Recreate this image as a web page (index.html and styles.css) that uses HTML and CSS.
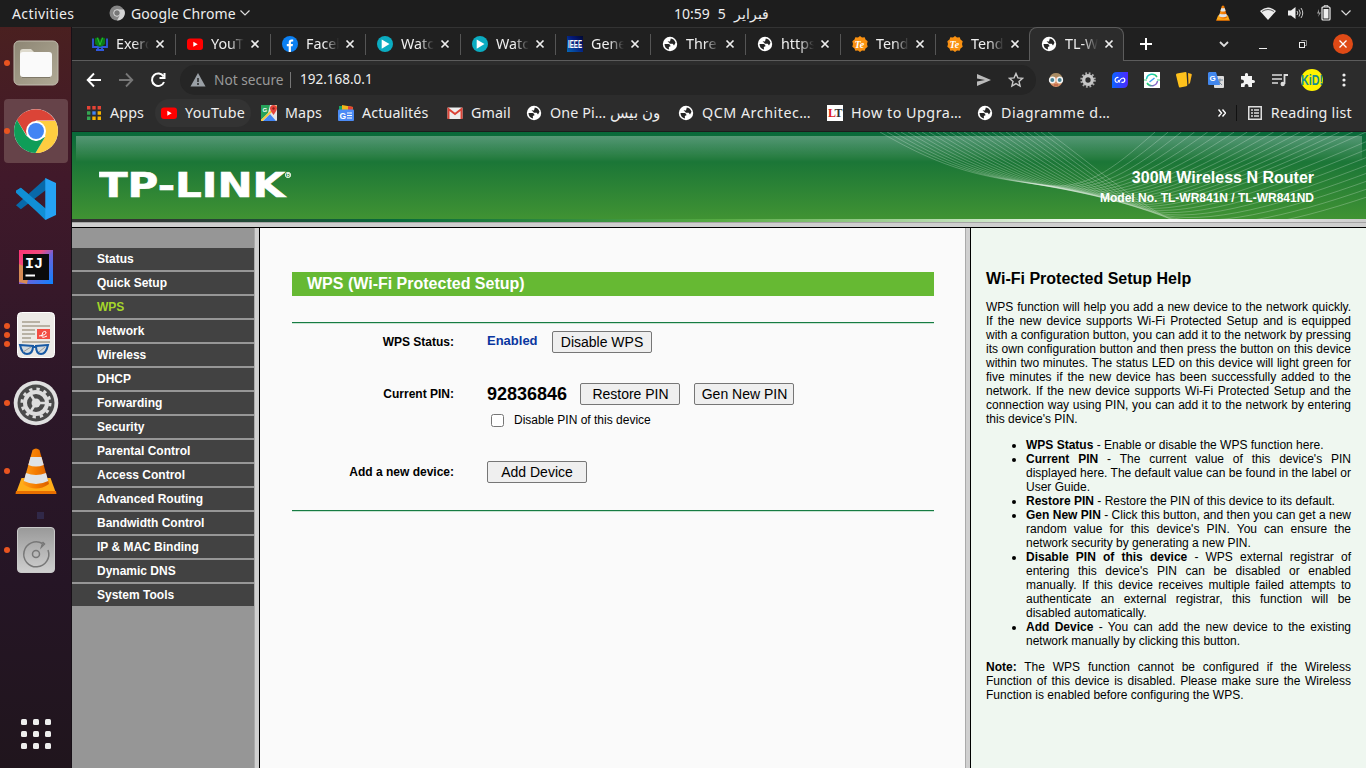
FILE: index.html
```html
<!DOCTYPE html>
<html lang="en">
<head>
<meta charset="utf-8">
<title>TL-WR841N</title>
<link rel="stylesheet" href="styles.css">
</head>
<body>
<svg class="defs" width="0" height="0">
  <defs>
    <linearGradient id="gBlue" x1="0" y1="0" x2="1" y2="0"><stop offset="0" stop-color="#0c64ff"/><stop offset="1" stop-color="#4c28ff"/></linearGradient>
    <linearGradient id="gRing" x1="0" y1="0" x2="1" y2="1"><stop offset="0" stop-color="#18c8e8"/><stop offset=".5" stop-color="#20d070"/><stop offset="1" stop-color="#b030f0"/></linearGradient>
    <linearGradient id="gIeee" x1="0" y1="1" x2="1" y2="0"><stop offset="0" stop-color="#0668b8"/><stop offset=".6" stop-color="#04197a"/><stop offset="1" stop-color="#010830"/></linearGradient>
    <linearGradient id="gFile" x1="0" y1="0" x2="1" y2="1"><stop offset="0" stop-color="#8d8674"/><stop offset="1" stop-color="#b0a995"/></linearGradient>
    <linearGradient id="gDisk" x1="0" y1="0" x2="0" y2="1"><stop offset="0" stop-color="#999"/><stop offset="1" stop-color="#cfcfcf"/></linearGradient>
    <linearGradient id="gCone" x1="0" y1="0" x2="1" y2="0"><stop offset="0" stop-color="#ff9e1b"/><stop offset=".5" stop-color="#f57c00"/><stop offset="1" stop-color="#d95f00"/></linearGradient>
    <linearGradient id="gIj" x1="0" y1="0" x2="1" y2="1"><stop offset="0" stop-color="#ff3274"/><stop offset=".35" stop-color="#ef4b7d"/><stop offset=".55" stop-color="#6c62dc"/><stop offset="1" stop-color="#0a84ff"/></linearGradient>
    <symbol id="globe" viewBox="0 0 16 16"><circle cx="8" cy="8" r="7.200" fill="#fff"/><path d="M2.500 8H7q1.500.8 1.500 2.200L6.800 11l.2 2.500Q2.700 12.500 2.500 8ZM5.500 5.200 8 5.500l.8-3q3.700.6 4.700 4.300L12 9.500l-1.300-1.700H8L6.800 6.600Z" fill="#252525"/></symbol>
    <symbol id="close" viewBox="0 0 10 10"><path d="M1.500 1.500l7 7M8.500 1.500l-7 7" stroke="#eee" stroke-width="1.700"/></symbol>
    <symbol id="yt" viewBox="0 0 16 16"><rect y="2.500" width="16" height="11.500" rx="3" fill="#f00"/><path d="M6.300 5.700v5l4.400-2.500Z" fill="#fff"/></symbol>
    <symbol id="fb" viewBox="0 0 16 16"><circle cx="8" cy="8" r="8" fill="#0c80f2"/><path d="M6.700 16v-5.700H4.800V8h1.900V6.300Q6.800 3.500 9.500 3.500h1.700v2H10q-1.100 0-1.100 1.100V8H11l-.4 2.300H8.900V16Z" fill="#fff"/></symbol>
    <symbol id="play" viewBox="0 0 16 16"><circle cx="8" cy="8" r="8" fill="#0bacc1"/><path d="M4.700 3.400v9.400L12.500 8Z" fill="#fff"/></symbol>
    <symbol id="ieee" viewBox="0 0 16 16"><rect width="16" height="16" fill="url(#gIeee)"/><text x="1" y="11.700" font-size="10.500" textLength="14" lengthAdjust="spacingAndGlyphs" class="bold" fill="#fff">IEEE</text></symbol>
    <symbol id="tenda" viewBox="0 0 16 16"><path d="m8 0 2 1.500 2.700-.3.8 2.400 2.200 1.700L15 8l.7 2.700-2.200 1.700-.8 2.400-2.700-.3L8 16l-2-1.500-2.700.3-.8-2.400L.3 10.700 1 8l-.7-2.700 2.200-1.700.8-2.400 2.700.3Z" fill="#fa9111"/><text x="2.500" y="11.500" font-size="10" class="script" fill="#fff">Te</text></symbol>
    <symbol id="exer" viewBox="0 0 16 16"><path d="M1 2.500V11h14V2.500M6 11v3M10 11v3M4 14h8" fill="none" stroke="#3058dc" stroke-width="1.800"/><path d="M3 2q1.500 1 2-1 2 0 3 4 1-4 3-4 .5 2 2 1v6q-3 3-5 3T3 8Z" fill="#0b7b16"/><path d="M5.500 2 8 9l2.500-7" fill="none" stroke="#29bf30"/></symbol>
    <symbol id="cone" viewBox="0 0 42 46"><path d="M6.500 30h29L41 45H1Z" fill="#ffad19"/><path d="M1 43h40l.5 3H.5Z" fill="#e87000"/><path d="M17.500 2q3.500-3 7 0L34 36q-13 9-26 0Z" fill="url(#gCone)"/><path d="m15.500 9 11 0 2.200 8q-7.700 3-15.400 0ZM11 25q10 4 20 0l2.200 8q-12.200 6-24.400 0Z" fill="#dfe3e6"/></symbol>
    <symbol id="chrome" viewBox="0 0 44 44"><circle cx="22" cy="22" r="22" fill="#fff"/><path d="M2.900 11A22 22 0 0 1 41 11.500H22L13 27Z" fill="#db4437"/><path d="M22 12h19.500A22 22 0 0 1 21.500 44L31.500 27Z" fill="#ffcd40"/><path d="M3 11A22 22 0 0 0 21.500 44L31 28 22 32 12.500 27Z" fill="#0f9d58"/><circle cx="22" cy="22" r="10" fill="#fff"/><circle cx="22" cy="22" r="8" fill="#4285f4"/></symbol>
  </defs>
</svg>

<div class="topbar">
  <span class="activities">Activities</span>
  <svg class="tb-chrome" viewBox="0 0 16 16"><circle cx="8" cy="8" r="7.500" fill="#858585"/><path d="M8 4.500h7A7.500 7.500 0 0 1 8 15.500L11 10Z" fill="#d4d4d4"/><circle cx="8" cy="8" r="3.300" fill="#777" stroke="#ddd"/></svg>
  <span class="appname">Google Chrome</span>
  <svg class="tb-chev" viewBox="0 0 12 8"><path d="M1.500 1.500 6 6l4.500-4.500" fill="none" stroke="#ddd" stroke-width="1.200"/></svg>
  <span class="clock" dir="ltr"><b>10:59</b><b>5</b><b class="month">فبراير</b></span>
  <span class="tray">
    <svg width="14" height="16"><use href="#cone"/></svg>
    <svg class="wifi" viewBox="0 0 16 13"><path d="M0 4q8-7 16 0L8 13Z" fill="#eee"/><path d="M2 4.500Q8 .500 14 4.500" fill="none" stroke="#1d1d1d" stroke-width=".7"/></svg>
    <svg class="vol" viewBox="0 0 16 14"><path d="M0 4.500h3L7.500 1v12L3 9.500H0Z" fill="#eee"/><path d="M9 5q1.700 2 0 4M11 3.500q2.500 3.500 0 7M13 2q3.500 5 0 10" fill="none" stroke="#ccc"/></svg>
    <svg class="bat" viewBox="0 0 15 16"><path d="M3 4 1 8.500h2L2 12l3-4.500H3Z" fill="#999"/><path d="M8 2V.8h4V2" fill="none" stroke="#eee"/><rect x="6" y="2" width="8" height="13" rx="1" fill="none" stroke="#eee" stroke-width="1.200"/><rect x="7.500" y="4" width="5" height="9.500" fill="#eee"/></svg>
    <svg class="tb-chev" viewBox="0 0 12 8"><path d="M1.500 1.500 6 6l4.500-4.500" fill="none" stroke="#ddd" stroke-width="1.200"/></svg>
  </span>
</div>

<div class="desktop">
  <nav class="dock">
    <div class="dk one"><svg width="46" height="46" viewBox="0 0 46 46"><rect x="1" y="1" width="44" height="44" rx="5" fill="url(#gFile)" stroke="#c1bcae"/><path d="M7 12q0-3 3-3h8l4 4v12H7Z" fill="#dedacd"/><rect x="7" y="12" width="32" height="25" rx="3" fill="#fafafa"/><path d="M9 37.500h28" stroke="#7e7868"/></svg></div>
    <div class="dk one active"><svg width="44" height="44"><use href="#chrome"/></svg></div>
    <div class="dk"><svg width="42" height="42" viewBox="0 0 43 43"><path d="m1 13 5-3 26 22-1 11Z" fill="#0786d0"/><path d="m1 28 5 4L32 12V0Z" fill="#0869aa"/><path d="m6 10 26 22v11L1 15v-2Z" fill="#118fd5"/><path d="m31 0 11 5v33l-11 5Z" fill="#25a2f4"/></svg></div>
    <div class="dk"><svg width="34" height="34" viewBox="0 0 34 34"><rect width="34" height="34" fill="url(#gIj)"/><path d="M0 14v18l8 2 3-15Z" fill="#d78b55"/><rect x="4" y="4" width="26" height="26" fill="#0b0b0b"/><text x="6" y="18" font-size="15" class="mono" fill="#fff">IJ</text><path d="M6.500 25.500h9.500" stroke="#fff" stroke-width="2"/></svg></div>
    <div class="dk three"><svg width="38" height="46" viewBox="0 0 38 46"><rect x=".5" y=".5" width="37" height="45" rx="4" fill="#eceae6" stroke="#fff"/><path d="M5 10h18M5 14h28M5 18h13M5 22h13M5 26h9M5 30h28" stroke="#b8b2a4" stroke-width="1.800"/><rect x="20" y="17" width="13" height="10" fill="#f34d43"/><path d="M22 24q8-1 7-4-3-2-4 3-1 4 5 1" fill="none" stroke="#fff"/><g fill="#d4dadd" stroke="#185aa4" stroke-width="2"><path d="m3 33 13 1q0 8-6 8-5 0-7-9ZM31 33l-12 1q0 8 5 8 5 0 7-9Z"/><path d="M16 35h3"/></g><path d="m6 40 8-5M22 40l6-5" stroke="#999"/></svg></div>
    <div class="dk one"><svg width="46" height="46" viewBox="0 0 46 46"><circle cx="23" cy="23" r="22.300" fill="#e0e0e0"/><circle cx="23" cy="23" r="18.500" fill="#4a4a4a"/><circle cx="23" cy="23" r="14" fill="none" stroke="#ddd" stroke-width="3" stroke-dasharray="3.300 4.030"/><circle cx="23" cy="23" r="11" fill="#4a4a4a" stroke="#ddd" stroke-width="4"/><path d="m23 23 9 0M23 23l-5-8M23 23l-5 8" stroke="#ddd" stroke-width="2.500"/><circle cx="23" cy="23" r="4.500" fill="#ddd"/></svg></div>
    <div class="dk one"><svg width="42" height="46"><use href="#cone"/></svg></div>
    <i class="dock-square"></i>
    <div class="dk one"><svg width="38" height="46" viewBox="0 0 38 46"><rect x=".5" y=".5" width="37" height="45" rx="3.500" fill="url(#gDisk)" stroke="#c9c9c9"/><path d="M25.500 16.500A12.500 12.500 0 1 0 31 23M25.500 16.500l-1 3.500 3-3-2-2" fill="none" stroke="#777" stroke-width="1.500"/><circle cx="19" cy="27" r="3.500" fill="none" stroke="#777" stroke-width="1.500"/></svg></div>
    <div class="apps-grid"><i></i><i></i><i></i><i></i><i></i><i></i><i></i><i></i><i></i></div>
  </nav>

  <div class="window">
    <div class="tabs">
      <div class="tab"><svg><use href="#exer"/></svg><span>Exerc</span><svg class="x"><use href="#close"/></svg></div>
      <div class="tab"><svg><use href="#yt"/></svg><span>YouTu</span><svg class="x"><use href="#close"/></svg></div>
      <div class="tab"><svg><use href="#fb"/></svg><span>Faceb</span><svg class="x"><use href="#close"/></svg></div>
      <div class="tab"><svg><use href="#play"/></svg><span>Watch</span><svg class="x"><use href="#close"/></svg></div>
      <div class="tab"><svg><use href="#play"/></svg><span>Watch</span><svg class="x"><use href="#close"/></svg></div>
      <div class="tab"><svg><use href="#ieee"/></svg><span>Gene</span><svg class="x"><use href="#close"/></svg></div>
      <div class="tab"><svg><use href="#globe"/></svg><span>Thre</span><svg class="x"><use href="#close"/></svg></div>
      <div class="tab"><svg><use href="#globe"/></svg><span>https</span><svg class="x"><use href="#close"/></svg></div>
      <div class="tab"><svg><use href="#tenda"/></svg><span>Tend</span><svg class="x"><use href="#close"/></svg></div>
      <div class="tab last"><svg><use href="#tenda"/></svg><span>Tend</span><svg class="x"><use href="#close"/></svg></div>
      <div class="tab current"><svg><use href="#globe"/></svg><span>TL-W</span><svg class="x"><use href="#close"/></svg></div>
      <div class="tab-tools">
        <svg width="12" height="12" viewBox="0 0 12 12"><path d="M0 6h12M6 0v12" stroke="#fff" stroke-width="2"/></svg>
        <svg class="caret" width="10" height="7" viewBox="0 0 10 7"><path d="m1 1 4 4 4-4" fill="none" stroke="#ddd" stroke-width="1.800"/></svg>
        <svg class="min" width="8" height="6"><path d="M0 5.500h8" stroke="#eee"/></svg>
        <svg class="max" width="8" height="8"><path d="M2.500 0v.5h5v5H6" fill="none" stroke="#888"/><rect x=".5" y="2.500" width="5" height="5" fill="none" stroke="#eee"/></svg>
        <span class="quit"><svg width="8" height="8"><path d="m.500.500 7 7M7.500.500l-7 7" stroke="#fff" stroke-width="1.300"/></svg></span>
      </div>
    </div>

    <div class="toolbar">
      <svg viewBox="0 0 16 16"><path d="M15 8H2M8 1.500 1.700 8 8 14.500" fill="none" stroke="#fff" stroke-width="1.900"/></svg>
      <svg viewBox="0 0 16 16"><path d="M1 8h13M8 1.500 14.300 8 8 14.500" fill="none" stroke="#777" stroke-width="1.800"/></svg>
      <svg viewBox="0 0 16 16"><path d="M13.500 4.500A6.200 6.200 0 1 0 14 10M14.500 1v5h-5" fill="none" stroke="#fff" stroke-width="2"/></svg>
      <div class="omnibox">
        <svg width="16" height="14" viewBox="0 0 16 14"><path d="M8 0l7.500 13.500H.5Z" fill="#9aa0a6"/><path d="M8 5v4M8 10v2" stroke="#252525" stroke-width="1.500"/></svg>
        <span class="insecure">Not secure</span><i></i><span class="url">192.168.0.1</span>
        <svg class="send" width="14" height="12"><path d="m0 0 14 6-14 6V7.500L8 6 0 4.500Z" fill="#bbb"/></svg>
        <svg class="star" width="16" height="16" viewBox="0 0 16 16"><path d="m8 1.500 1.900 4.400 4.700.4-3.600 3.100 1.100 4.600L8 11.600 3.900 14 5 9.400 1.400 6.300l4.700-.4Z" fill="none" stroke="#c8c8c8" stroke-width="1.400"/></svg>
      </div>
      <div class="ext">
        <svg viewBox="0 0 16 16"><circle cx="8" cy="8.500" r="6.500" fill="#d89267"/><path d="M1.500 6Q3 1 8 1t6.500 5q-6-2-13 0Z" fill="#a98c64"/><circle cx="4.300" cy="8" r="2.700" fill="#4b8494" stroke="#f4f4f4" stroke-width="1.500"/><circle cx="11.700" cy="8" r="2.700" fill="#4b8494" stroke="#f4f4f4" stroke-width="1.500"/><path d="M6 13h4" stroke="#b54a3a"/></svg>
        <svg viewBox="0 0 16 16"><circle cx="8" cy="8" r="6.500" fill="none" stroke="#aaa" stroke-width="2.500" stroke-dasharray="1.700 1.700"/><circle cx="8" cy="8" r="4.300" fill="none" stroke="#c6c6c6" stroke-width="3.300"/></svg>
        <svg viewBox="0 0 16 16"><path d="M5 0h11v11q0 5-5 5H0V5q0-5 5-5Z" fill="url(#gBlue)"/><path d="M6.500 5.500Q3.500 5 3 8q.5 3 3 2 1.500-1 2.500-2.500T11.500 6q2 1 1 3.500-1.500 1.500-3 .5M6 8l2 2.500" fill="none" stroke="#fff" stroke-width="1.200"/></svg>
        <svg viewBox="0 0 16 16"><rect width="16" height="16" fill="#fff"/><path d="M2.500 7a5.700 5.700 0 0 1 10.500-2M13.500 9a5.700 5.700 0 0 1-10.500 2" fill="none" stroke="url(#gRing)" stroke-width="1.500"/><path d="m5.500 10 5-4" stroke="#40a0f0" stroke-width="1.500"/><path d="M0 8h3M13 8h3" stroke="#41d07f"/></svg>
        <svg viewBox="0 0 16 16"><path d="M1 1.500 9.500 0q1 0 1 1l.8 12q0 1-1 1.300L4 15.600q-1 .1-1.200-1L0 3q0-1.300 1-1.500Z" fill="#ffc21c"/><path d="m12 1 3 .8q1 .3.8 1L14 11l-1.500 1.500Z" fill="#ffb81c"/></svg>
        <svg viewBox="0 0 16 16"><rect x="6" y="4" width="10" height="12" rx="1" fill="#ddd"/><path d="M9 8h6M12 6.500V8q0 4-2 5M10 9l4 4" stroke="#789" fill="none"/><path d="M1 0h7l4 13H1q-1 0-1-1V1Z" fill="#4287ed"/><text x="1.500" y="9" font-size="8" class="bold" fill="#fff">G</text></svg>
        <svg viewBox="0 0 16 16"><path d="M1 4h4Q4.500 1 6.500 1T8 4h4v4q3-.5 3 1.500T12 11v4H8.500q0-3-2-3t-2 3H1v-3.500q3 .2 3-2T1 7.500Z" fill="#f4f4f4"/></svg>
        <svg viewBox="0 0 16 16"><path d="M0 3h10M0 7h10M0 11h6" stroke="#ddd" stroke-width="1.600"/><path d="M12.500 12V3H16" fill="none" stroke="#ddd" stroke-width="1.800"/><circle cx="10.700" cy="12" r="2.200" fill="#ddd"/></svg>
        <svg class="avatar" viewBox="0 0 22 22"><circle cx="11" cy="11" r="11" fill="#fff200"/><text x="0" y="15.500" font-size="14" textLength="22" class="bold" lengthAdjust="spacingAndGlyphs" fill="#158d91">KiD!</text></svg>
        <svg viewBox="0 0 16 16"><g fill="#eee"><circle cx="8" cy="3" r="1.600"/><circle cx="8" cy="8" r="1.600"/><circle cx="8" cy="13" r="1.600"/></g></svg>
      </div>
    </div>

    <div class="bookmarks">
      <div class="bm w75"><svg viewBox="0 0 16 16"><path d="M1 1h3.400v3.400H1ZM6.300 1h3.400v3.400H6.300ZM11.600 1H15v3.400h-3.400Z" fill="#e54335"/><path d="M1 6.300h3.400v3.400H1ZM1 11.600h3.400V15H1Z" fill="#34a853"/><path d="M6.300 6.300h3.400v3.400H6.300Z" fill="#4285f4"/><path d="M11.600 6.300H15v3.400h-3.400ZM6.300 11.600h3.400V15H6.300ZM11.600 11.600H15V15h-3.400Z" fill="#f5b400"/></svg><span>Apps</span></div>
      <div class="bm hot"><svg><use href="#yt"/></svg><span>YouTube</span></div>
      <div class="bm w77"><svg viewBox="0 0 16 16"><rect width="16" height="16" rx="1" fill="#e7e7e7"/><path d="M0 0h9l-2 8-7 7Z" fill="#26a35a"/><path d="m2 16 7-7 6 7Z" fill="#4285f4"/><path d="m0 16 16-15" stroke="#f7c83e" stroke-width="2"/><text x="1.500" y="6.500" font-size="6" class="bold" fill="#fff">G</text><path d="M12.500 10Q9 5 9 3.500a3.500 3.500 0 0 1 7 0Q16 5 12.500 10Z" fill="#e6453a"/><circle cx="12.500" cy="3.500" r="1.200" fill="#8f211c"/></svg><span>Maps</span></div>
      <div class="bm w109"><svg viewBox="0 0 16 16"><path d="M1 1h10v5H1Z" fill="#1aa260"/><path d="m4 0 11 2-1 5H4Z" fill="#f4b619"/><path d="m10 1 5 1-1 4h-4Z" fill="#e74335"/><rect y="4.500" width="16" height="11.500" rx="1" fill="#4c8bf5"/><text x="1.500" y="13.500" font-size="8.500" class="bold" fill="#fff">G</text><path d="M9 8h5M9 10.500h5M9 13h5" stroke="#fff"/></svg><span>Actualités</span></div>
      <div class="bm w79"><svg viewBox="0 0 16 16"><rect x=".5" y="2.500" width="15" height="11.500" rx="1" fill="#eee"/><path d="M1.500 14V4L8 9l6.500-5v10" fill="none" stroke="#db4437" stroke-width="2"/></svg><span>Gmail</span></div>
      <div class="bm w152"><svg><use href="#globe"/></svg><span dir="ltr">One Pi… <bdi>ون بيس</bdi></span></div>
      <div class="bm w149 wide"><svg><use href="#globe"/></svg><span>QCM Architec…</span></div>
      <div class="bm w150 wide"><svg viewBox="0 0 16 16"><rect width="16" height="16" fill="#fff"/><text x="1" y="12" font-size="12" class="serif" fill="#e01b22">L</text><text x="7.500" y="12" font-size="12" class="serif" fill="#333">T</text></svg><span>How to Upgra…</span></div>
      <div class="bm wide"><svg><use href="#globe"/></svg><span>Diagramme d…</span></div>
      <div class="reading"><svg width="8" height="8"><path d="m.500.500 3 3.500-3 3.500M4.500.500l3 3.500-3 3.500" fill="none" stroke="#fff" stroke-width="1.400"/></svg><i></i><svg width="14" height="14"><rect x=".75" y=".75" width="12.500" height="12.500" fill="none" stroke="#ddd" stroke-width="1.500"/><path d="M3 4h2M3 7h2M3 10h2M6 4h5M6 7h5M6 10h5" stroke="#ddd" stroke-width="1.300"/></svg><span>Reading list</span></div>
    </div>

    <div class="page">
      <header class="banner">
        <div class="shine"></div>
        <svg class="waves" id="waves" viewBox="0 0 486 87"></svg>
        <svg class="logo" viewBox="0 0 200 34"><text x="0" y="27.500" class="logotype" textLength="186" lengthAdjust="spacingAndGlyphs">TP-LINK</text><circle cx="189" cy="6" r="2.700" fill="none" stroke="#d8eedb"/><text x="187.500" y="8" font-size="5" class="bold" fill="#fff">R</text></svg>
        <div class="model"><h1>300M Wireless N Router</h1><p>Model No. TL-WR841N / TL-WR841ND</p></div>
      </header>
      <div class="strip"></div><div class="rule"></div>
      <div class="frames">
        <ul class="menu">
          <li>Status</li><li>Quick Setup</li><li class="sel">WPS</li><li>Network</li><li>Wireless</li><li>DHCP</li><li>Forwarding</li><li>Security</li><li>Parental Control</li><li>Access Control</li><li>Advanced Routing</li><li>Bandwidth Control</li><li>IP &amp; MAC Binding</li><li>Dynamic DNS</li><li>System Tools</li>
        </ul>
        <div class="split"></div>
        <main class="main">
          <h2>WPS (Wi-Fi Protected Setup)</h2>
          <div class="form">
            <div class="row r1"><label>WPS Status:</label><span class="enabled">Enabled</span><button>Disable WPS</button></div>
            <div class="row r2"><label>Current PIN:</label><span class="pin">92836846</span><button class="restore">Restore PIN</button><button class="gen">Gen New PIN</button></div>
            <div class="row r3"><label></label><input type="checkbox"><span>Disable PIN of this device</span></div>
            <div class="row r4"><label>Add a new device:</label><button>Add Device</button></div>
          </div>
        </main>
        <div class="split"></div>
        <aside class="help">
          <h3>Wi-Fi Protected Setup Help</h3>
          <p>WPS function will help you add a new device to the network quickly. If the new device supports Wi-Fi Protected Setup and is equipped with a configuration button, you can add it to the network by pressing its own configuration button and then press the button on this device within two minutes. The status LED on this device will light green for five minutes if the new device has been successfully added to the network. If the new device supports Wi-Fi Protected Setup and the connection way using PIN, you can add it to the network by entering this device's PIN.</p>
          <ul>
            <li><b>WPS Status</b> - Enable or disable the WPS function here.</li>
            <li><b>Current PIN</b> - The current value of this device's PIN displayed here. The default value can be found in the label or User Guide.</li>
            <li><b>Restore PIN</b> - Restore the PIN of this device to its default.</li>
            <li><b>Gen New PIN</b> - Click this button, and then you can get a new random value for this device's PIN. You can ensure the network security by generating a new PIN.</li>
            <li><b>Disable PIN of this device</b> - WPS external registrar of entering this device's PIN can be disabled or enabled manually. If this device receives multiple failed attempts to authenticate an external registrar, this function will be disabled automatically.</li>
            <li><b>Add Device</b> - You can add the new device to the existing network manually by clicking this button.</li>
          </ul>
          <p><b>Note:</b> The WPS function cannot be configured if the Wireless Function of this device is disabled. Please make sure the Wireless Function is enabled before configuring the WPS.</p>
        </aside>
      </div>
    </div>
  </div>
</div>
<script src="waves.js"></script>
</body>
</html>
```
FILE: waves.js
```js
// Each line falls from the top edge, touches a shared lower envelope, then rises to the right.
const waves = document.getElementById('waves');
const count = 25;
for (let i = 0; i < count; i++) {
  const t = i / (count - 1);
  const mix = (a, b) => a + (b - a) * t;
  const ex = mix(165, 290), ey = 53 + 20 * t + 14 * t * t;
  const k = i / 16;
  const endX = k <= 1 ? 275 + 211 * k : 490;
  const endY = k <= 1 ? 0 : (i - 16) * 8;
  const p = document.createElementNS('http://www.w3.org/2000/svg', 'path');
  p.setAttribute('d',
    `M${168 * t} 0C${mix(65, 215)} ${mix(38, 35)} ${mix(105, 255)} ${mix(46, 70)} ${ex} ${ey}` +
    `C${ex + mix(40, 55)} ${ey + mix(5, 16)} ${endX - mix(45, 90)} ${endY + mix(40, 30)} ${endX} ${endY}`);
  waves.appendChild(p);
}
```
FILE: styles.css
```css
* { box-sizing: border-box; }
body { margin: 0; width: 1366px; height: 768px; overflow: hidden; background: #2c2c2c; color: #eee; font: 14.3px "Noto Sans", sans-serif; }
svg { flex: none; display: block; }
.defs { position: absolute; }
.bold { font-family: "Liberation Sans", sans-serif; font-weight: bold; }
.script { font-family: "Liberation Serif", serif; font-weight: bold; font-style: italic; }
.serif { font-family: "Liberation Serif", serif; font-weight: bold; }
.mono { font-family: "Liberation Mono", monospace; font-weight: bold; }

.topbar { height: 27px; background: #1d1d1d; display: flex; align-items: center; padding: 0 0 1px 12px; font-size: 14px; }
.activities { width: 97px; letter-spacing: .4px; }
.tb-chrome { width: 16px; height: 16px; margin-right: 6px; }
.appname { width: 108px; letter-spacing: .1px; white-space: nowrap; }
.tb-chev { width: 12px; height: 8px; }
.clock { display: flex; margin-left: 423px; width: 96px; gap: 8px; white-space: nowrap; }
.clock b { font-weight: normal; }
.clock .month { font-size: 13.700px; }
.tray { margin-left: auto; margin-right: 14px; display: flex; align-items: center; }
.wifi { width: 16px; height: 13px; margin-left: 30px; }
.vol { width: 16px; height: 14px; margin-left: 12px; }
.bat { width: 15px; height: 16px; margin: 0 9px 0 12px; }

.desktop { display: flex; height: 741px; }
.dock { width: 72px; padding: 2px 0 0 4px; display: flex; flex-direction: column; background: linear-gradient(#4a2020, #41192a 20%, #2c1728 50%, #251525 75%, #20151d); border-right: 1px solid #171017; }
.dk { width: 64px; height: 64px; margin: 2px 0; border-radius: 4px; display: flex; align-items: center; justify-content: center; position: relative; }
.dk.active { background: #664349; }
.one::before, .three::before { content: ""; position: absolute; left: 0; top: 29px; width: 6px; height: 6px; border-radius: 50%; background: #e95420; }
.three::before { box-shadow: 0 -9px #e95420, 0 9px #e95420; }
.dock-square { width: 7px; height: 7px; background: #302848; margin: 7px 0 -3px 33px; }
.apps-grid { margin: auto 0 19px 17px; display: grid; grid-template-columns: repeat(3, 6px); gap: 6px; }
.apps-grid i { height: 6px; border-radius: 1.500px; background: #eee; }

.window { width: 1294px; display: flex; flex-direction: column; }
.tabs { height: 34px; background: #202020; padding-left: 8px; display: flex; box-shadow: inset 0 -1px #5c5c5c, inset 0 1px #333; }
.tab { width: 95px; height: 34px; display: flex; align-items: center; padding-left: 12px; position: relative; }
.tab::after { content: ""; position: absolute; right: -1px; top: 7px; width: 1px; height: 21px; background: #555; }
.tab.last::after, .tab.current::after { display: none; }
.tab svg { width: 16px; height: 16px; }
.tab span { width: 33px; margin-left: 8px; padding-bottom: 2px; overflow: hidden; white-space: nowrap; -webkit-mask: linear-gradient(90deg, #000 55%, transparent 100%); mask: linear-gradient(90deg, #000 55%, transparent 100%); }
.tab .x { width: 10px; height: 10px; margin-left: 6px; }
.tab.current { background: #2c2c2c; border: 1px solid #5c5c5c; border-bottom: 0; border-radius: 8px 8px 0 0; padding: 0 0 1px 11px; margin-left: -1px; }
.tab-tools { display: flex; align-items: center; flex: 1; padding-left: 16px; }
.caret { margin-left: 67px; }
.min { margin: 4px 0 0 30px; }
.max { margin-left: 32px; }
.quit { width: 20px; height: 20px; border-radius: 50%; background: #df4a16; margin-left: 26px; display: flex; align-items: center; justify-content: center; }

.toolbar { height: 38px; display: flex; align-items: center; padding-left: 14px; }
.toolbar > svg { width: 16px; height: 16px; margin-right: 16px; }
.omnibox { width: 856px; height: 30px; margin-left: -2px; border-radius: 15px; background: #252525; display: flex; align-items: center; padding-left: 10px; }
.omnibox i { width: 1px; height: 16px; background: #777; margin-right: 9px; }
.insecure { color: #999; width: 76px; margin-left: 8px; padding-bottom: 2px; white-space: nowrap; font-size: 13.700px; }
.url { font-size: 13.500px; padding-bottom: 2px; }
.send { margin-left: auto; }
.star { margin: 0 12px 0 17px; }
.ext { display: flex; align-items: center; margin-left: 12px; gap: 16px; }
.ext svg { width: 16px; height: 16px; }
.ext .avatar { width: 22px; height: 22px; margin: 0 -3px; }

.bookmarks { height: 33px; display: flex; align-items: center; padding: 0 14px 4px; border-bottom: 1px solid #1c1c1c; letter-spacing: .1px; }
.bm { display: flex; align-items: center; gap: 8px; white-space: nowrap; height: 28px; }
.bm svg { width: 16px; height: 16px; }
.bm span { padding-bottom: 2px; }
.bm bdi { font-size: 15px; }
.wide { letter-spacing: .52px; }
.w75 { width: 75px; } .w77 { width: 77px; } .w109 { width: 109px; } .w79 { width: 79px; } .w152 { width: 152px; } .w149 { width: 149px; } .w150 { width: 150px; }
.hot { background: #333; border-radius: 14px; width: 96px; padding-left: 6px; margin: 0 10px 0 -6px; letter-spacing: .35px; }
.reading { margin-left: auto; display: flex; align-items: center; white-space: nowrap; letter-spacing: .25px; }
.reading i { width: 1px; height: 16px; background: #111; margin: 0 11px 0 10px; }
.reading span { margin-left: 9px; padding-bottom: 2px; }

.page { flex: 1; display: flex; flex-direction: column; font-family: "Liberation Sans", Arial, sans-serif; font-size: 12px; color: #000; }
.banner { height: 87px; background: linear-gradient(#08693a, #1b7637 28%, #1b7637 34%, #409333); position: relative; display: flex; justify-content: space-between; }
.shine { position: absolute; left: 4px; right: 4px; top: 4px; height: 26px; background: linear-gradient(rgba(255,255,255,.3), rgba(255,255,255,0)); }
.waves { position: absolute; right: 0; top: 0; width: 486px; height: 87px; fill: none; stroke: rgba(255,255,255,.27); stroke-width: .9; }
.logo { width: 200px; height: 34px; margin: 37px 0 0 27px; position: relative; }
.logotype { font: bold 33px "DejaVu Sans", sans-serif; fill: #fff; stroke: #fff; stroke-width: .6; }
.model { color: #fff; text-align: right; font-weight: bold; margin: 36px 52px 0 0; position: relative; }
.model h1 { font-size: 16px; line-height: 19px; margin: 0; }
.model p { margin: 4px 0 0; line-height: 14px; }
.strip { height: 3px; background: linear-gradient(90deg, #333 0, #333 5%, #08693a 25%, #56aa43 50%, #fff 80%, #fff 82%, #ccc); }
.rule { height: 6px; background: #cfcfcf; border-top: 1px solid #a5a5a5; border-bottom: 1px solid #000; }
.frames { flex: 1; display: flex; }
.menu { width: 182px; background: #969696; margin: 0; padding: 20px 0 0; list-style: none; }
.menu li { height: 22px; margin-bottom: 2px; background: #424242; color: #fff; font-weight: bold; line-height: 22px; padding-left: 25px; }
.menu .sel { color: #a5d62b; }
.split { width: 6px; background: #d0d0d0; border-left: 1px solid #aaa; border-right: 1px solid #000; }
.main { width: 705px; background: #fafafa; padding: 44px 31px 0 32px; }
.main h2 { margin: 0; height: 24px; line-height: 24px; background: #66b933; color: #fff; font-size: 16px; padding-left: 15px; }
.form { margin-top: 26px; height: 189px; border-top: 1px solid #167b43; border-bottom: 1px solid #167b43; box-shadow: 0 1px #c9e4d2, inset 0 1px #c9e4d2; }
.row { display: flex; align-items: center; height: 22px; }
.row label { width: 162px; margin-right: 33px; text-align: right; font-weight: bold; }
.r1 { margin-top: 8px; } .r2 { margin-top: 30px; } .r3 { margin-top: 4px; } .r4 { margin-top: 30px; }
.enabled { color: #0a36a0; font-weight: bold; font-size: 13px; width: 65px; padding-bottom: 3px; }
.pin { font-size: 18px; font-weight: bold; width: 93px; }
.row button { width: 100px; height: 22px; padding: 0; font: 14px "Liberation Sans", Arial, sans-serif; color: #000; background: #efefef; border: 1px solid #767676; border-radius: 2px; }
.row .restore { padding-left: 1px; }
.row .gen { margin-left: 14px; padding-left: 1px; }
.row input { width: 13px; height: 13px; margin: 0 10px 0 4px; }
.help { width: 395px; background: #eff7f0; padding: 41px 15px 0; line-height: 14px; text-align: justify; }
.help h3 { font-size: 16px; line-height: 19px; margin: 0 0 12px; }
.help p, .help ul { margin: 0 0 12px; }
.help ul { padding-left: 40px; }
```
